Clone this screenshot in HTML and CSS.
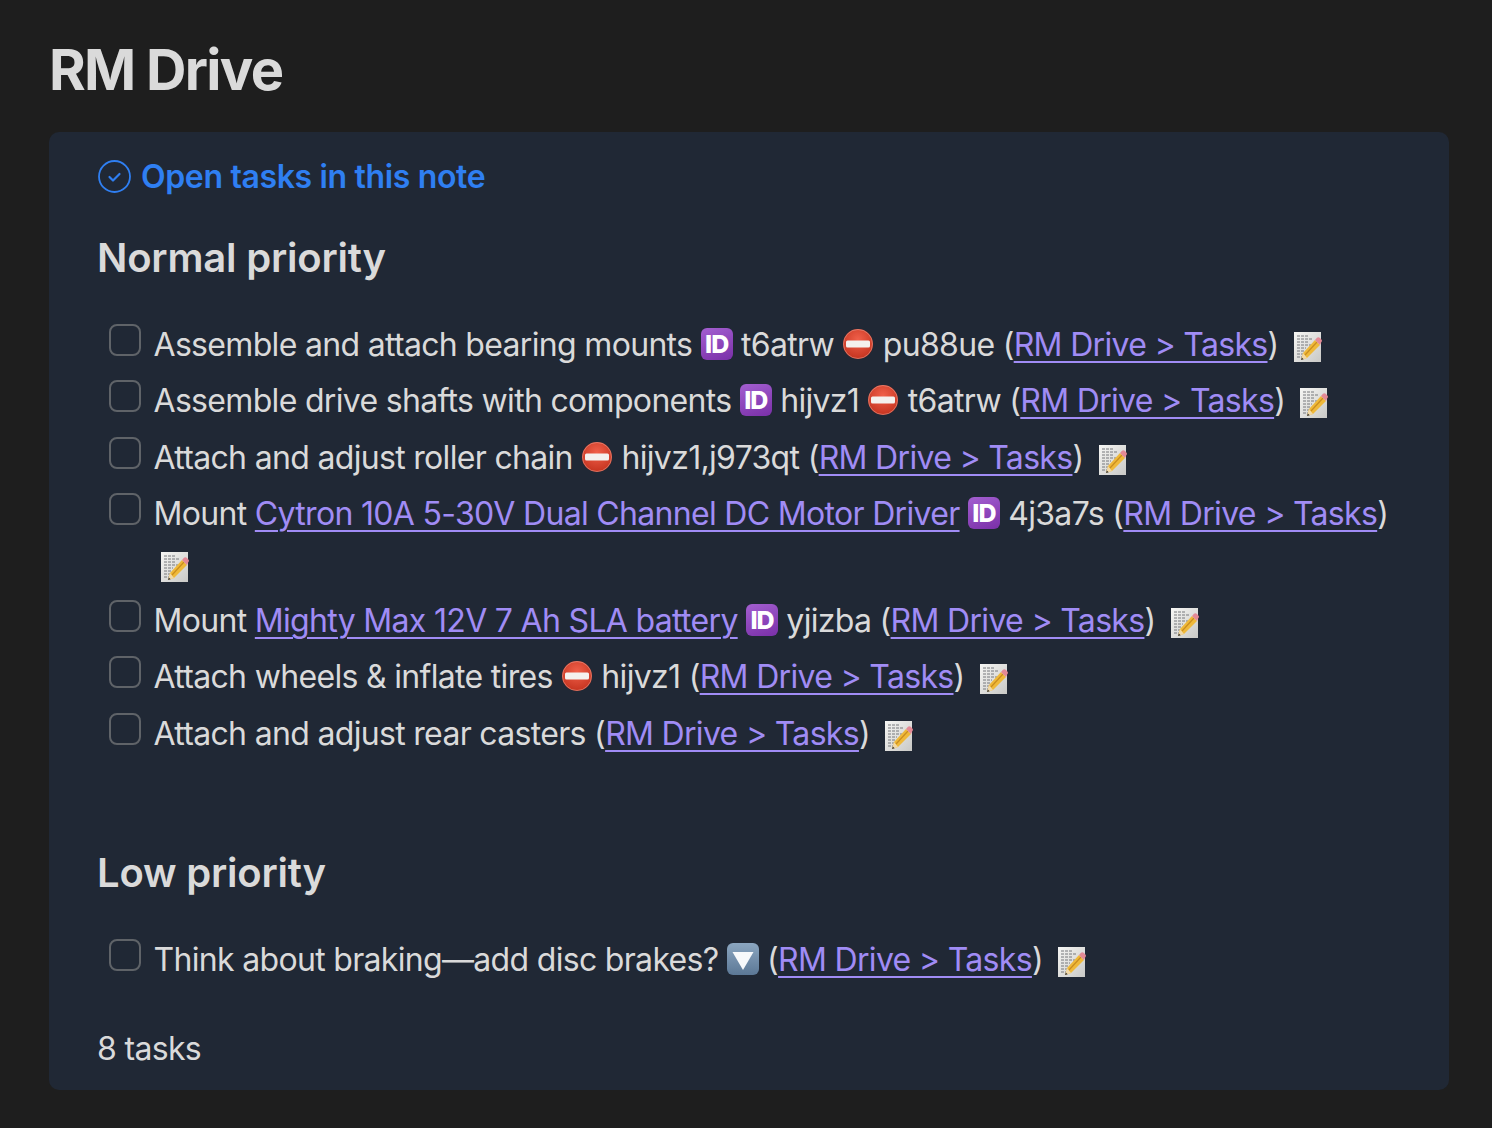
FILE: index.html
```html
<!DOCTYPE html>
<html lang="en">
<head>
<meta charset="utf-8">
<title>RM Drive</title>
<link rel="stylesheet" href="styles.css">
</head>
<body>
<svg class="defs" width="0" height="0" aria-hidden="true">
  <defs>
    <radialGradient id="red" cx="50%" cy="35%" r="70%"><stop offset="0" stop-color="#f0604a"/><stop offset="1" stop-color="#c2301c"/></radialGradient>
    <linearGradient id="paper" x1="0" y1="0" x2="1" y2="1"><stop offset="0" stop-color="#f6f6f4"/><stop offset="1" stop-color="#c9c9c6"/></linearGradient>
    <linearGradient id="steel" x1="0" y1="0" x2="0" y2="1"><stop offset="0" stop-color="#8ba6c0"/><stop offset="1" stop-color="#5c7896"/></linearGradient>
    <symbol id="entry" viewBox="0 0 32 32">
      <circle cx="16" cy="16" r="15" fill="url(#red)"/>
      <circle cx="16" cy="16" r="14.500" fill="none" stroke="#e9a99c" stroke-opacity=".5"/>
      <rect x="4" y="12.500" width="24" height="7" rx="1.500" fill="#f4f1ee"/>
    </symbol>
    <symbol id="memo" viewBox="0 0 30 32">
      <rect x="1" y="1" width="27" height="30" fill="url(#paper)"/>
      <path d="M4 5h11M4 8h16M4 11h12M4 14h14M4 17h9M4 20h8M4 23h7M4 26h5" stroke="#77797c" stroke-width="1" stroke-dasharray="3 1"/>
      <path d="M8 29l2-7L22 9l5 5L14 27z" fill="#efb93a"/>
      <path d="M8 29l2-7 4 5z" fill="#f1d9a8"/>
      <path d="M8 29l.8-2.600 1.900 1.800z" fill="#333"/>
      <path d="M12 24L24 11" stroke="#c98d1f" stroke-width="1.200"/>
      <path d="M22 9l2-2.200c.8-.8 1.900-.8 2.700 0l1.700 1.700c.8.8.7 1.900 0 2.600L27 14z" fill="#e48a96"/>
    </symbol>
    <symbol id="down" viewBox="0 0 32 32">
      <rect width="32" height="32" rx="6" fill="url(#steel)"/>
      <path d="M5.500 9h21L16 27z" fill="#f7f9fb"/>
    </symbol>
  </defs>
</svg>
<main class="page">
  <h1 class="title">RM Drive</h1>
  <section class="callout">
    <div class="callout-title">
      <svg class="check-icon" viewBox="0 0 33 33" aria-hidden="true">
        <circle cx="16.500" cy="16.500" r="15.500" fill="none" stroke="currentColor" stroke-width="1.800"/>
        <path d="M11.500 17l3.500 3.500 6.500-6.500" fill="none" stroke="currentColor" stroke-width="2.200" stroke-linecap="round" stroke-linejoin="round"/>
      </svg>
      <span>Open tasks in this note</span>
    </div>

    <h2 class="group group-first">Normal priority</h2>
    <ul class="tasks">
      <li class="task"><span class="box"></span><div class="task-text">Assemble and attach bearing mounts <span class="id">ID</span> t6atrw <svg class="emoji"><use href="#entry"/></svg> pu88ue (<a href="#">RM Drive &gt; Tasks</a>) <svg class="memo"><use href="#memo"/></svg></div></li>
      <li class="task"><span class="box"></span><div class="task-text">Assemble drive shafts with components <span class="id">ID</span> hijvz1 <svg class="emoji"><use href="#entry"/></svg> t6atrw (<a href="#">RM Drive &gt; Tasks</a>) <svg class="memo"><use href="#memo"/></svg></div></li>
      <li class="task"><span class="box"></span><div class="task-text">Attach and adjust roller chain <svg class="emoji"><use href="#entry"/></svg> hijvz1,j973qt (<a href="#">RM Drive &gt; Tasks</a>) <svg class="memo"><use href="#memo"/></svg></div></li>
      <li class="task"><span class="box"></span><div class="task-text">Mount <a href="#">Cytron 10A 5-30V Dual Channel DC Motor Driver</a> <span class="id">ID</span> 4j3a7s (<a href="#">RM Drive &gt; Tasks</a>) <svg class="memo"><use href="#memo"/></svg></div></li>
      <li class="task"><span class="box"></span><div class="task-text">Mount <a href="#">Mighty Max 12V 7 Ah SLA battery</a> <span class="id">ID</span> yjizba (<a href="#">RM Drive &gt; Tasks</a>) <svg class="memo"><use href="#memo"/></svg></div></li>
      <li class="task"><span class="box"></span><div class="task-text">Attach wheels &amp; inflate tires <svg class="emoji"><use href="#entry"/></svg> hijvz1 (<a href="#">RM Drive &gt; Tasks</a>) <svg class="memo"><use href="#memo"/></svg></div></li>
      <li class="task"><span class="box"></span><div class="task-text">Attach and adjust rear casters (<a href="#">RM Drive &gt; Tasks</a>) <svg class="memo"><use href="#memo"/></svg></div></li>
    </ul>

    <h2 class="group group-next">Low priority</h2>
    <ul class="tasks">
      <li class="task"><span class="box"></span><div class="task-text">Think about braking—add disc brakes? <svg class="emoji"><use href="#down"/></svg> (<a href="#">RM Drive &gt; Tasks</a>) <svg class="memo"><use href="#memo"/></svg></div></li>
    </ul>

    <p class="count">8 tasks</p>
  </section>
</main>
</body>
</html>
```

FILE: styles.css
```css
* { box-sizing: border-box; }
html, body { margin: 0; padding: 0; }
body {
  background: #1e1e1e;
  color: #dadada;
  font-family: Inter, "Liberation Sans", sans-serif;
  font-size: 32px;
  line-height: 51px;
  letter-spacing: -0.680px;
  height: 1128px;
  overflow: hidden;
}
.defs { position: absolute; }
.page { padding: 34px 43px 0 49px; }
.title {
  margin: 0 0 26px;
  font-size: 56px;
  line-height: 72px;
  font-weight: 700;
  letter-spacing: -1.700px;
}
.callout {
  height: 958px;
  padding: 19px 48px 0;
  background: #202835;
  border-radius: 10px;
}
.callout-title {
  display: flex;
  align-items: center;
  gap: 10px;
  height: 50px;
  padding-left: 1px;
  color: #2f7ff2;
  font-weight: 600;
  letter-spacing: -0.350px;
}
.check-icon { width: 33px; height: 33px; margin-top: 1px; }
.group {
  margin: 0;
  font-size: 40px;
  line-height: 50px;
  font-weight: 600;
  letter-spacing: -0.200px;
}
.group-first { margin-top: 32px; margin-bottom: 36px; }
.group-next { margin-top: 84px; margin-bottom: 36px; }
.tasks { list-style: none; margin: 0; padding: 0 0 0 12px; }
.task { display: flex; padding-bottom: 5.300px; }
.box {
  flex: none;
  width: 32px;
  height: 32px;
  margin-top: 5px;
  border: 2px solid #5f6368;
  border-radius: 8px;
}
.task-text { margin-left: 12.500px; flex: 1; min-width: 0; }
a { color: #a08cf5; text-decoration: underline; text-underline-offset: 5px; text-decoration-thickness: 2px; }
.id {
  display: inline-flex;
  align-items: center;
  justify-content: center;
  width: 32px;
  height: 32px;
  vertical-align: 3px;
  border-radius: 6px;
  background: linear-gradient(160deg, #a35fd0, #7a2fa8);
  color: #fff;
  font-size: 25px;
  line-height: 32px;
  font-weight: 800;
  letter-spacing: -1px;
}
.emoji { width: 32px; height: 32px; vertical-align: -4px; }
.memo { width: 30px; height: 32px; margin-left: 6px; vertical-align: -7px; }
.count { margin: 33px 0 0; }
```
